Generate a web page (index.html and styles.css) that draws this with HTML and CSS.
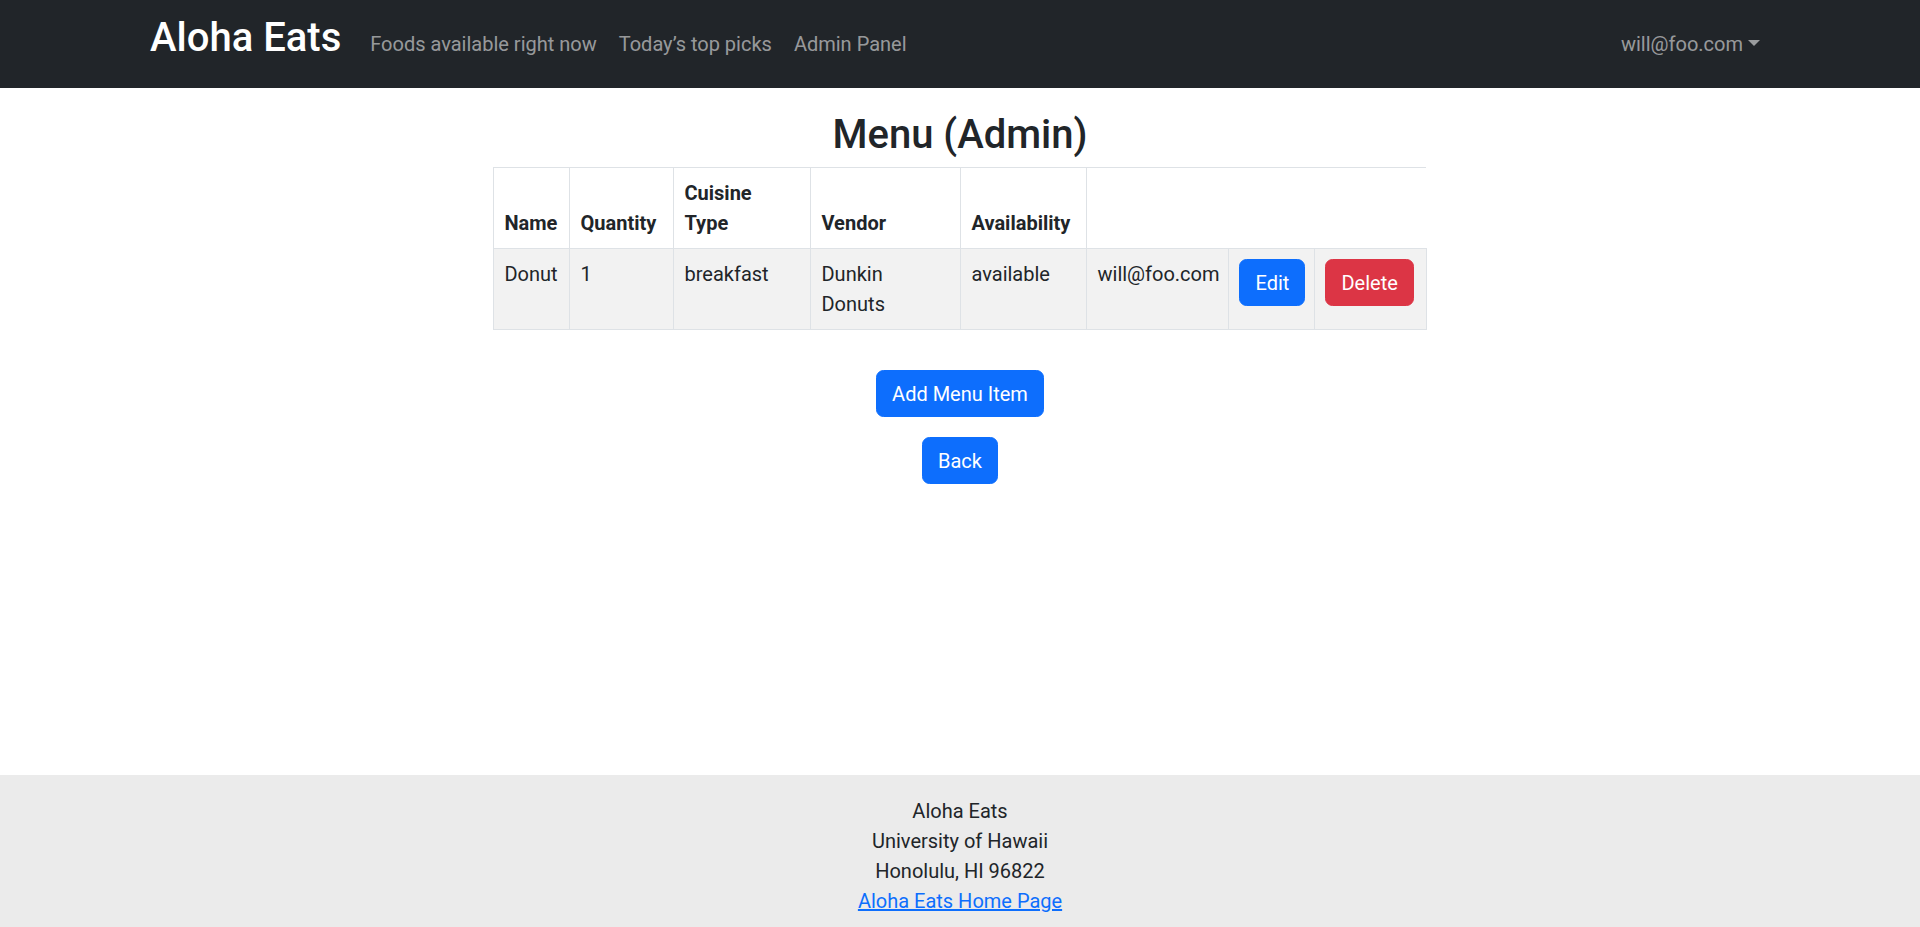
FILE: index.html
```html
<!DOCTYPE html>
<html lang="en">
<head>
<meta charset="utf-8">
<title>Aloha Eats - Menu (Admin)</title>
<link rel="stylesheet" href="styles.css">
</head>
<body>
<div class="page">
  <nav class="navbar">
    <div class="container nav-inner">
      <a class="brand" href="#">Aloha Eats</a>
      <ul class="nav-links">
        <li><a class="nav-link" href="#">Foods available right now</a></li>
        <li><a class="nav-link" href="#">Today’s top picks</a></li>
        <li><a class="nav-link" href="#">Admin Panel</a></li>
      </ul>
      <div class="nav-right">
        <a class="nav-link dropdown-toggle" href="#">will@foo.com</a>
      </div>
    </div>
  </nav>

  <main class="main">
    <div class="container content">
      <h2 class="title">Menu (Admin)</h2>
      <table class="menu-table">
        <colgroup>
          <col class="c-name">
          <col class="c-qty">
          <col class="c-cuisine">
          <col class="c-vendor">
          <col class="c-avail">
          <col class="c-owner">
          <col class="c-edit">
          <col class="c-delete">
        </colgroup>
        <thead>
          <tr>
            <th>Name</th>
            <th>Quantity</th>
            <th><span class="stack-words">Cuisine Type</span></th>
            <th>Vendor</th>
            <th>Availability</th>
            <th class="blank" colspan="3"></th>
          </tr>
        </thead>
        <tbody>
          <tr>
            <td>Donut</td>
            <td>1</td>
            <td>breakfast</td>
            <td>Dunkin Donuts</td>
            <td>available</td>
            <td class="nowrap">will@foo.com</td>
            <td><a class="btn btn-primary" href="#">Edit</a></td>
            <td><button class="btn btn-danger" type="button">Delete</button></td>
          </tr>
        </tbody>
      </table>
      <div class="actions">
        <a class="btn btn-primary" href="#">Add Menu Item</a>
        <a class="btn btn-primary" href="#">Back</a>
      </div>
    </div>
  </main>

  <footer class="footer">
    <div>Aloha Eats</div>
    <div>University of Hawaii</div>
    <div>Honolulu, HI 96822</div>
    <div><a class="footer-link" href="#">Aloha Eats Home Page</a></div>
  </footer>
</div>
</body>
</html>
```

FILE: styles.css
```css
* {
  box-sizing: border-box;
}

html, body {
  margin: 0;
  padding: 0;
}

body {
  font-family: Roboto, "Liberation Sans", Arial, sans-serif;
  font-size: 20px;
  line-height: 30px;
  color: #212529;
  background: #ffffff;
}

.page {
  min-height: 100vh;
  display: flex;
  flex-direction: column;
}

.container {
  width: 1650px;
  margin: 0 auto;
  padding: 0 15px;
}

/* Navbar */
.navbar {
  background: #212529;
  height: 88px;
}

.nav-inner {
  height: 88px;
  display: flex;
  align-items: center;
}

.brand {
  color: #ffffff;
  text-decoration: none;
  font-size: 40px;
  font-weight: 500;
  line-height: 60px;
  padding-bottom: 12px;
  margin-right: 18px;
  white-space: nowrap;
}

.nav-links {
  list-style: none;
  margin: 0;
  padding: 0;
  display: flex;
  align-items: center;
}

.nav-link {
  display: block;
  color: rgba(255, 255, 255, 0.55);
  text-decoration: none;
  font-size: 20px;
  line-height: 30px;
  padding: 0 11px;
  white-space: nowrap;
}

.nav-right {
  margin-left: auto;
}

.nav-right .nav-link {
  padding-right: 10px;
}

.dropdown-toggle::after {
  content: "";
  display: inline-block;
  margin-left: 5px;
  vertical-align: 5px;
  border-top: 6px solid rgba(255, 255, 255, 0.55);
  border-left: 6px solid transparent;
  border-right: 6px solid transparent;
  border-bottom: 0;
}

/* Main */
.main {
  flex: 1;
}

.content {
  padding-top: 23px;
  display: flex;
  flex-direction: column;
  align-items: center;
}

.title {
  margin: 0 0 8px;
  font-size: 40px;
  line-height: 48px;
  font-weight: 500;
  text-align: center;
}

.menu-table {
  width: 932px;
  table-layout: fixed;
  border-collapse: collapse;
  margin: 0;
}

.c-name { width: 76px; }
.c-qty { width: 104px; }
.c-cuisine { width: 137px; }
.c-vendor { width: 150px; }
.c-avail { width: 126px; }
.c-owner { width: 142px; }
.c-edit { width: 86px; }
.c-delete { width: 111px; }

.menu-table th,
.menu-table td {
  border: 1px solid #dee2e6;
  padding: 10px;
  text-align: left;
}

.menu-table th {
  font-weight: 700;
  vertical-align: bottom;
}

.stack-words {
  display: inline-block;
  width: min-content;
}

.menu-table th.blank {
  border-left: none;
  border-right: none;
}

.menu-table td {
  vertical-align: top;
  background: #f2f2f2;
}

.nowrap {
  white-space: nowrap;
}

/* Buttons */
.btn {
  display: inline-block;
  font-family: inherit;
  font-size: 20px;
  line-height: 30px;
  padding: 7.5px 15px;
  border: 1px solid transparent;
  border-radius: 7.5px;
  color: #ffffff;
  text-decoration: none;
  cursor: pointer;
  white-space: nowrap;
}

.btn-primary {
  background: #0d6efd;
  border-color: #0d6efd;
}

.btn-danger {
  background: #dc3545;
  border-color: #dc3545;
}

.actions {
  margin-top: 40px;
  display: flex;
  flex-direction: column;
  align-items: center;
  gap: 20px;
}

/* Footer */
.footer {
  background: #ebebeb;
  text-align: center;
  padding: 21px 0 11px;
  font-size: 20px;
  line-height: 30px;
}

.footer-link {
  color: #0d6efd;
  text-decoration: underline;
}
```
